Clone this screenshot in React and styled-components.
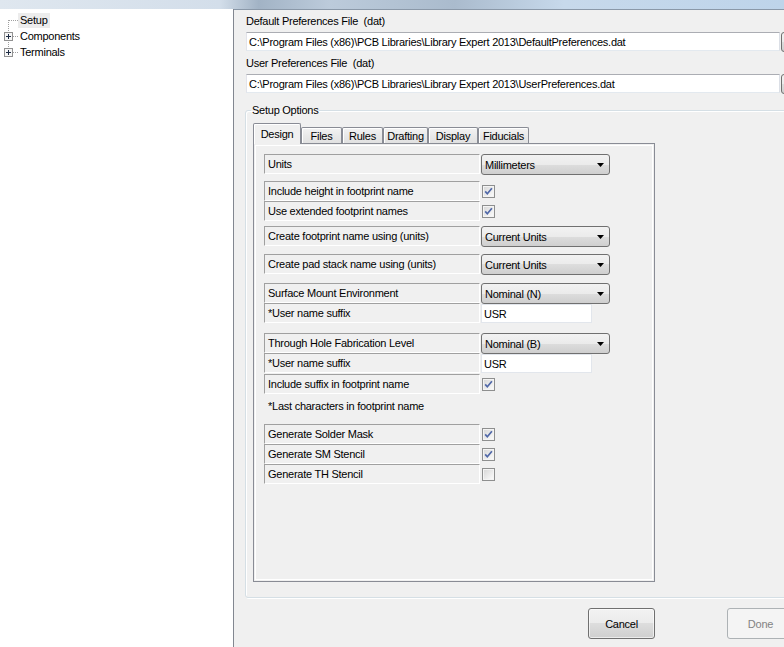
import React from "react";
import styled, { createGlobalStyle } from "styled-components";

const GlobalStyle = createGlobalStyle`
  html, body {
    margin: 0;
    padding: 0;
  }
  body {
    width: 784px;
    height: 647px;
    overflow: hidden;
    background: #f0f0f0;
    font-family: "Liberation Sans", Arial, sans-serif;
    font-size: 11px;
    letter-spacing: -0.25px;
    color: #000;
  }
  * {
    box-sizing: border-box;
  }
`;

const Window = styled.div`
  width: 784px;
  height: 647px;
  display: flex;
  flex-direction: column;
  overflow: hidden;
`;

const TitleStrip = styled.div`
  height: 9px;
  flex-shrink: 0;
  background: linear-gradient(
    90deg,
    #dfe7ef 0%,
    #d3deea 28%,
    #a2b3c5 33%,
    #bccbdb 42%,
    #aabbcd 58%,
    #c7d9eb 72%,
    #bed4ea 100%
  );
`;

const Body = styled.div`
  flex: 1;
  display: flex;
  min-height: 0;
`;

const TreePane = styled.div`
  width: 234px;
  flex-shrink: 0;
  background: #fff;
  border-right: 1px solid #828790;
  padding-top: 3px;
`;

const TreeNode = styled.div`
  display: flex;
  align-items: center;
  height: 16px;
`;

const NodeLabel = styled.span`
  padding: 0 2px;
  line-height: 15px;
  white-space: nowrap;
  background: ${(p) => (p.$selected ? "#ececec" : "transparent")};
`;

const RightPane = styled.div`
  flex: 1;
  min-width: 0;
  overflow: hidden;
  border-top: 1px solid #8a98a8;
  padding: 5px 0 0 12px;
  display: flex;
  flex-direction: column;
`;

const Field = styled.div`
  margin-top: ${(p) => p.$mt || 0}px;
  display: flex;
  flex-direction: column;
`;

const FieldLabel = styled.div`
  line-height: 13px;
  margin-bottom: 4px;
  white-space: pre;
`;

const PathRow = styled.div`
  display: flex;
  gap: 1px;
`;

const PathInput = styled.div`
  width: 534px;
  height: 19px;
  flex-shrink: 0;
  background: #fff;
  border: 1px solid;
  border-color: #abadb3 #dbdfe6 #e3e9ef #e2e3ea;
  padding: 0 2px;
  display: flex;
  align-items: center;
  white-space: nowrap;
`;

const BrowseButton = styled.div`
  width: 30px;
  height: 20px;
  flex-shrink: 0;
  border: 1px solid #707070;
  border-radius: 3px;
  background: linear-gradient(#f2f2f2 0%, #ebebeb 50%, #dddddd 50%, #cfcfcf 100%);
`;

const GroupBox = styled.fieldset`
  margin: 10px 0 0 -1px;
  width: 560px;
  min-width: 0;
  flex-shrink: 0;
  padding: 6px 0 15px 7px;
  border: 1px solid #d5dfe5;
  border-radius: 3px;
  box-shadow: inset 1px 1px 0 #fff, 1px 1px 0 #fff;
`;

const Legend = styled.legend`
  padding: 0 1px;
  margin-left: -2px;
  line-height: 13px;
`;

const TabControl = styled.div`
  width: 402px;
`;

const TabStrip = styled.div`
  display: flex;
  align-items: flex-end;
  height: 21px;
  position: relative;
  z-index: 1;
`;

const Tab = styled.div`
  width: ${(p) => p.$w}px;
  height: ${(p) => (p.$active ? 21 : 16)}px;
  margin-bottom: ${(p) => (p.$active ? 0 : 1)}px;
  border: 1px solid #898c95;
  border-bottom: none;
  border-radius: 2px 2px 0 0;
  background: ${(p) =>
    p.$active ? "#f0f0f0" : "linear-gradient(#f3f3f3, #e9e9e9 50%, #e1e1e1)"};
  box-shadow: inset 1px 1px 0 #fff;
  display: flex;
  align-items: center;
  justify-content: center;
  padding-bottom: ${(p) => (p.$active ? 1 : 0)}px;
  white-space: nowrap;
`;

const TabPanel = styled.div`
  height: 439px;
  margin-top: -1px;
  border: 1px solid #898c95;
  box-shadow: inset 0 0 0 1px #f0f0f0, inset 0 0 0 2px #fff;
  padding: 10px 0 0 10px;
  display: flex;
  flex-direction: column;
`;

const Row = styled.div`
  display: flex;
  align-items: flex-start;
  height: 20px;
  margin-top: ${(p) => p.$mt || 0}px;
`;

const LabelCell = styled.div`
  width: 216px;
  height: 20px;
  flex-shrink: 0;
  border: 1px solid;
  border-color: #a0a0a0 #fff #fff #a0a0a0;
  padding-left: 3px;
  display: flex;
  align-items: center;
  white-space: nowrap;
`;

const Dropdown = styled.div`
  width: 129px;
  height: 21px;
  margin-left: 1px;
  flex-shrink: 0;
  border: 1px solid #707070;
  border-radius: 3px;
  background: linear-gradient(#f2f2f2 0%, #ebebeb 50%, #dddddd 50%, #cfcfcf 100%);
  display: flex;
  align-items: center;
  justify-content: space-between;
  padding: 0 5px 0 3px;
  white-space: nowrap;
`;

const TextBox = styled.div`
  width: 111px;
  height: 19px;
  margin: 1px 0 0 1px;
  background: #fff;
  border: 1px solid #e2e6ec;
  padding-left: 2px;
  display: flex;
  align-items: center;
`;

const CheckWrap = styled.div`
  margin: 4px 0 0 2px;
  width: 13px;
  height: 13px;
  display: flex;
`;

const Note = styled.div`
  margin-top: 6px;
  padding-left: 4px;
  line-height: 13px;
`;

const ButtonRow = styled.div`
  display: flex;
  gap: 72px;
  margin: 10px 0 0 342px;
`;

const Button = styled.div`
  width: 67px;
  height: 31px;
  flex-shrink: 0;
  border: 1px solid ${(p) => (p.$disabled ? "#adb2b5" : "#707070")};
  border-radius: 3px;
  background: ${(p) =>
    p.$disabled
      ? "#f4f4f4"
      : "linear-gradient(#f2f2f2 0%, #ebebeb 50%, #dddddd 50%, #cfcfcf 100%)"};
  box-shadow: inset 0 0 0 1px ${(p) => (p.$disabled ? "#f4f4f4" : "rgba(255,255,255,0.6)")};
  color: ${(p) => (p.$disabled ? "#838383" : "#000")};
  display: flex;
  align-items: center;
  justify-content: center;
`;

const TreeLines = ({ first, last, expandable }) => (
  <svg width="18" height="16" viewBox="0 0 18 16" style={{ flexShrink: 0 }}>
    <line
      x1="8.5"
      y1={first ? 8 : 0}
      x2="8.5"
      y2={last ? 4 : 16}
      stroke="#a0a0a0"
      strokeDasharray="1 1"
    />
    <line
      x1={expandable ? 13 : 9}
      y1="8.5"
      x2="18"
      y2="8.5"
      stroke="#a0a0a0"
      strokeDasharray="1 1"
    />
    {expandable && (
      <g>
        <rect x="4.5" y="4.5" width="8" height="8" fill="#f6f6f6" stroke="#919191" />
        <line x1="6" y1="8.5" x2="11" y2="8.5" stroke="#1f2d44" />
        <line x1="8.5" y1="6" x2="8.5" y2="11" stroke="#1f2d44" />
      </g>
    )}
  </svg>
);

const Arrow = () => (
  <svg width="7" height="4" viewBox="0 0 7 4">
    <polygon points="0,0 7,0 3.5,4" fill="#000" />
  </svg>
);

const CheckBox = ({ checked }) => (
  <CheckWrap>
    <svg width="13" height="13" viewBox="0 0 13 13">
      <defs>
        <linearGradient id="cbfill" x1="0" y1="0" x2="1" y2="1">
          <stop offset="0" stopColor="#d9d9d9" />
          <stop offset="1" stopColor="#fafafa" />
        </linearGradient>
      </defs>
      <rect x="0.5" y="0.5" width="12" height="12" fill="#f4f4f4" stroke="#8e8f8f" />
      <rect x="2" y="2" width="9" height="9" fill="url(#cbfill)" />
      {checked && (
        <path d="M3.2 6.4 L5.3 8.8 L9.9 3.2" fill="none" stroke="#5068a8" strokeWidth="1.7" />
      )}
    </svg>
  </CheckWrap>
);

const tabs = [
  { name: "Design", w: 48, active: true },
  { name: "Files", w: 41 },
  { name: "Rules", w: 41 },
  { name: "Drafting", w: 45 },
  { name: "Display", w: 50 },
  { name: "Fiducials", w: 51 },
];

const App = () => {
  return (
    <Window>
      <GlobalStyle />
      <TitleStrip />
      <Body>
        <TreePane>
          <TreeNode>
            <TreeLines first />
            <NodeLabel $selected>Setup</NodeLabel>
          </TreeNode>
          <TreeNode>
            <TreeLines expandable />
            <NodeLabel>Components</NodeLabel>
          </TreeNode>
          <TreeNode>
            <TreeLines expandable last />
            <NodeLabel>Terminals</NodeLabel>
          </TreeNode>
        </TreePane>

        <RightPane>
          <Field>
            <FieldLabel>Default Preferences File  (dat)</FieldLabel>
            <PathRow>
              <PathInput>
                C:\Program Files (x86)\PCB Libraries\Library Expert 2013\DefaultPreferences.dat
              </PathInput>
              <BrowseButton />
            </PathRow>
          </Field>
          <Field $mt={5}>
            <FieldLabel>User Preferences File  (dat)</FieldLabel>
            <PathRow>
              <PathInput>
                C:\Program Files (x86)\PCB Libraries\Library Expert 2013\UserPreferences.dat
              </PathInput>
              <BrowseButton />
            </PathRow>
          </Field>

          <GroupBox>
            <Legend>Setup Options</Legend>
            <TabControl>
              <TabStrip>
                {tabs.map((t) => (
                  <Tab key={t.name} $w={t.w} $active={t.active}>
                    {t.name}
                  </Tab>
                ))}
              </TabStrip>
              <TabPanel>
                <Row>
                  <LabelCell>Units</LabelCell>
                  <Dropdown>
                    Millimeters <Arrow />
                  </Dropdown>
                </Row>
                <Row $mt={7}>
                  <LabelCell>Include height in footprint name</LabelCell>
                  <CheckBox checked />
                </Row>
                <Row>
                  <LabelCell>Use extended footprint names</LabelCell>
                  <CheckBox checked />
                </Row>
                <Row $mt={5}>
                  <LabelCell>Create footprint name using (units)</LabelCell>
                  <Dropdown>
                    Current Units <Arrow />
                  </Dropdown>
                </Row>
                <Row $mt={8}>
                  <LabelCell>Create pad stack name using (units)</LabelCell>
                  <Dropdown>
                    Current Units <Arrow />
                  </Dropdown>
                </Row>
                <Row $mt={9}>
                  <LabelCell>Surface Mount Environment</LabelCell>
                  <Dropdown>
                    Nominal (N) <Arrow />
                  </Dropdown>
                </Row>
                <Row>
                  <LabelCell>*User name suffix</LabelCell>
                  <TextBox>USR</TextBox>
                </Row>
                <Row $mt={10}>
                  <LabelCell>Through Hole Fabrication Level</LabelCell>
                  <Dropdown>
                    Nominal (B) <Arrow />
                  </Dropdown>
                </Row>
                <Row>
                  <LabelCell>*User name suffix</LabelCell>
                  <TextBox>USR</TextBox>
                </Row>
                <Row $mt={1}>
                  <LabelCell>Include suffix in footprint name</LabelCell>
                  <CheckBox checked />
                </Row>
                <Note>*Last characters in footprint name</Note>
                <Row $mt={11}>
                  <LabelCell>Generate Solder Mask</LabelCell>
                  <CheckBox checked />
                </Row>
                <Row>
                  <LabelCell>Generate SM Stencil</LabelCell>
                  <CheckBox checked />
                </Row>
                <Row>
                  <LabelCell>Generate TH Stencil</LabelCell>
                  <CheckBox />
                </Row>
              </TabPanel>
            </TabControl>
          </GroupBox>

          <ButtonRow>
            <Button>Cancel</Button>
            <Button $disabled>Done</Button>
          </ButtonRow>
        </RightPane>
      </Body>
    </Window>
  );
};

export default App;
